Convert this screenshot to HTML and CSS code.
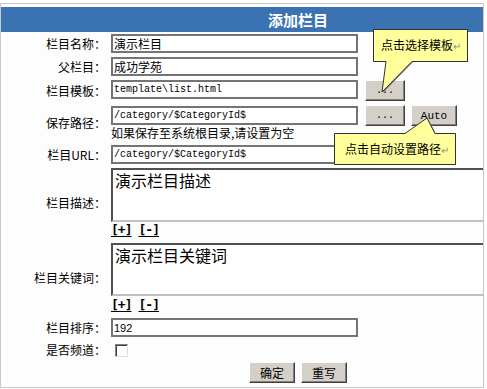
FILE: index.html
```html
<!DOCTYPE html>
<html lang="zh-CN">
<head>
  <meta charset="UTF-8" />
  <title>添加栏目</title>
  <link rel="stylesheet" href="styles.css">
</head>
<body>
  <div class="frame">
    <div class="sheet">
      <div class="head">添加栏目</div>

      <div class="row r-name">
        <label class="lbl">栏目名称：</label>
        <div class="ctl"><input class="txt" type="text" value="演示栏目"></div>
      </div>
      <div class="row r-parent">
        <label class="lbl">父栏目：</label>
        <div class="ctl"><input class="txt" type="text" value="成功学苑"></div>
      </div>
      <div class="row r-tpl">
        <label class="lbl">栏目模板：</label>
        <div class="ctl">
          <input class="txt mono" type="text" value="template\list.html">
          <button class="btn dots" type="button">...</button>
        </div>
      </div>
      <div class="row r-path">
        <label class="lbl">保存路径：</label>
        <div class="ctl-col">
          <div class="ctl">
            <input class="txt mono" type="text" value="/category/$CategoryId$">
            <button class="btn dots" type="button">...</button>
            <button class="btn auto" type="button">Auto</button>
          </div>
          <div class="hint">如果保存至系统根目录,请设置为空</div>
        </div>
      </div>
      <div class="row r-url">
        <label class="lbl">栏目URL：</label>
        <div class="ctl"><input class="txt mono" type="text" value="/category/$CategoryId$"></div>
      </div>
      <div class="row r-desc">
        <label class="lbl">栏目描述：</label>
        <div class="ctl-col">
          <textarea class="area">演示栏目描述</textarea>
          <div class="sizer"><a href="#">[+]</a><a href="#">[-]</a></div>
        </div>
      </div>
      <div class="row r-keys">
        <label class="lbl">栏目关键词：</label>
        <div class="ctl-col">
          <textarea class="area">演示栏目关键词</textarea>
          <div class="sizer"><a href="#">[+]</a><a href="#">[-]</a></div>
        </div>
      </div>
      <div class="row r-order">
        <label class="lbl">栏目排序：</label>
        <div class="ctl"><input class="txt num" type="text" value="192"></div>
      </div>
      <div class="row r-chan">
        <label class="lbl">是否频道：</label>
        <div class="ctl"><span class="check"></span></div>
      </div>
      <div class="actions">
        <button class="btn act" type="button">确定</button>
        <button class="btn act" type="button">重写</button>
      </div>
    </div>
  </div>

  <!-- balloon tips -->
  <svg class="tip tip-tpl" width="104" height="70" viewBox="370 27 104 70">
    <path class="tip-shade" d="M374 30 H468 V62 H413 L383 93 L387 62 H374 Z" />
    <path class="tip-body" d="M373.5 29.5 H467.5 V61.5 H412 L382 92 L386 61.5 H373.5 Z" />
    <text x="381" y="50">点击选择模板<tspan class="ret">↵</tspan></text>
  </svg>
  <svg class="tip tip-auto" width="128" height="52" viewBox="331 116 128 52">
    <path class="tip-shade" d="M335 134 H406 L428 119 L436 134 H456 V165 H335 Z" />
    <path class="tip-body" d="M334.5 133.5 H405 L427 118 L435 133.5 H455.5 V164.5 H334.5 Z" />
    <text x="345" y="154">点击自动设置路径<tspan class="ret">↵</tspan></text>
  </svg>
</body>
</html>
```

FILE: styles.css
```css
body {
  margin: 0;
  padding-top: 3px;
  background: #fff;
  font-family: "Noto Sans CJK SC", sans-serif;
  font-size: 12px;
  color: #000;
}
.frame {
  width: 482px;
  height: 383px;
  border: 1px solid #c8c8c8;
  overflow: hidden;
  background: #fdfdfd;
}
.sheet {
  width: 594px;
  padding-top: 3px;
}
.head {
  height: 25px;
  line-height: 25px;
  background: #3a72b2;
  color: #fff;
  font-size: 15px;
  font-weight: bold;
  text-align: center;
}
.row {
  display: grid;
  grid-template-columns: 105px 1fr;
  column-gap: 5px;
  align-items: center;
}
.lbl {
  text-align: right;
  line-height: 14px;
}
.ctl {
  display: flex;
  align-items: center;
}
.ctl-col {
  display: flex;
  flex-direction: column;
}
.txt {
  box-sizing: border-box;
  width: 247px;
  height: 19px;
  margin: 0;
  padding: 0 1px;
  border: 2px solid #747474;
  background: #fff;
  font-family: "Noto Sans CJK SC", sans-serif;
  font-size: 12px;
  color: #000;
}
.txt.mono {
  font-family: "Liberation Mono", monospace;
  font-size: 10px;
}
.txt.num {
  font-family: "Liberation Sans", sans-serif;
  font-size: 11px;
}
.btn {
  box-sizing: border-box;
  height: 21px;
  margin: 0;
  padding: 0;
  background: #d4d0c8;
  border: 1px solid;
  border-color: #fff #404040 #404040 #fff;
  box-shadow: inset -1px -1px 0 #808080;
  font-family: "Noto Sans CJK SC", sans-serif;
  font-size: 12px;
  color: #000;
}
.btn.dots {
  width: 40px;
  margin-left: 7px;
  font-family: "Liberation Mono", monospace;
  font-size: 10px;
}
.btn.auto {
  width: 46px;
  margin-left: 6px;
  font-family: "Liberation Mono", monospace;
  font-size: 11px;
}
.hint {
  height: 14px;
  line-height: 14px;
}
.area {
  display: block;
  box-sizing: border-box;
  width: 470px;
  margin: 0;
  padding: 1px 2px;
  border: 2px solid;
  border-color: #505050 #c0c0c0 #c0c0c0 #505050;
  background: #fff;
  font-family: "Noto Sans CJK SC", sans-serif;
  font-size: 16px;
  line-height: 18px;
  resize: none;
}
.sizer {
  display: flex;
  gap: 7px;
  height: 14px;
  align-items: flex-start;
}
.sizer a {
  display: block;
  height: 14px;
  line-height: 12px;
  color: #000;
  font-family: "DejaVu Sans Mono", monospace;
  font-size: 13px;
  font-weight: bold;
  text-decoration: underline;
  text-underline-offset: 2px;
  letter-spacing: -1px;
}
.check {
  display: block;
  box-sizing: border-box;
  width: 13px;
  height: 13px;
  margin-left: 4px;
  background: #fff;
  border: 1px solid;
  border-color: #808080 #e0e0e0 #e0e0e0 #808080;
  box-shadow: inset 1px 1px 0 #404040;
}
.actions {
  display: flex;
  justify-content: center;
  gap: 6px;
  padding-top: 1px;
}
.btn.act {
  width: 46px;
}

/* row spacing */
.r-name, .r-parent, .r-order { padding: 2px 0 2px; }
.r-tpl { padding: 2px 0 1px; }
.r-tpl .ctl { align-items: flex-start; }
.r-path { padding: 3px 0 1px; }
.r-url { padding: 4px 0 2px; }
.r-desc { padding: 2px 0 2px; }
.r-desc .area { height: 54px; }
.r-desc .sizer { margin-top: 2px; }
.r-keys { padding: 3px 0 3px; }
.r-keys .area { height: 53px; }
.r-keys .sizer { margin-top: 3px; }
.r-chan { height: 22px; }

/* tips */
.tip {
  position: absolute;
  overflow: visible;
}
.tip-tpl { left: 370px; top: 27px; }
.tip-auto { left: 331px; top: 116px; }
.tip-shade { fill: #7a7a7a; }
.tip-body {
  fill: #ffff9c;
  stroke: #303030;
  stroke-width: 1;
}
.tip text {
  font-family: "Noto Sans CJK SC", sans-serif;
  font-size: 12px;
  fill: #000;
}
.tip .ret {
  fill: #909090;
  font-size: 10px;
}
```
